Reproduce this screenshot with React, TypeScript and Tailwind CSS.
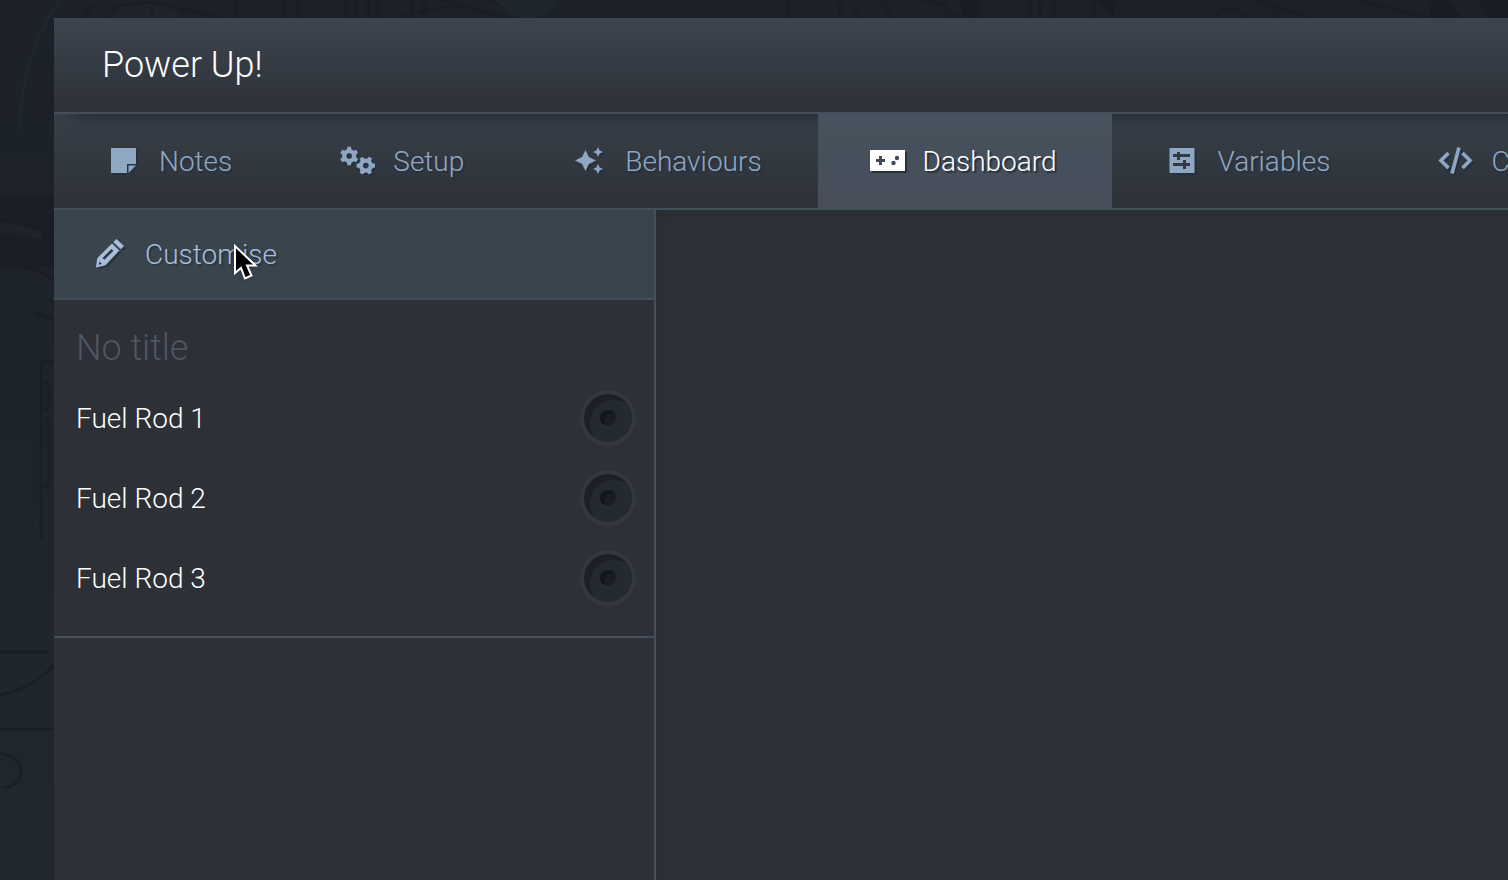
import type { ReactNode } from "react";

type Tab = { label: string; icon: ReactNode; active?: boolean };

function NotesIcon() {
  return (
    <svg viewBox="0 0 36 36" className="h-9 w-9 shrink-0" fill="currentColor" aria-hidden>
      <path d="M5 5h25v16h-9v9H5z" />
      <path d="M22.500 22.500H30L22.500 30z" />
    </svg>
  );
}

function Gear({ cx, cy, turn }: { cx: number; cy: number; turn: number }) {
  return (
    <g transform={`translate(${cx} ${cy}) rotate(${turn})`}>
      <circle r="5" fill="none" stroke="currentColor" strokeWidth="4.200" />
      {[0, 60, 120, 180, 240, 300].map((a) => (
        <path key={a} d="M-2.300 -6h4.600l-.5 -3.200h-3.600z" transform={`rotate(${a})`} />
      ))}
    </g>
  );
}

function SetupIcon() {
  return (
    <svg viewBox="0 0 36 36" className="h-9 w-9 shrink-0" fill="currentColor" aria-hidden>
      <Gear cx={9.2} cy={13} turn={0} />
      <Gear cx={25.8} cy={22.6} turn={30} />
    </svg>
  );
}

function SparkleIcon() {
  return (
    <svg viewBox="0 0 36 36" className="h-9 w-9 shrink-0" fill="currentColor" aria-hidden>
      <path d="M13.500 7l3.400 7.100L24 17.500l-7.100 3.400L13.500 28l-3.400-7.100L3 17.500l7.100-3.400z" />
      <path d="M26 4l1.600 3.400L31 9l-3.400 1.600L26 14l-1.600-3.400L21 9l3.400-1.600z" />
      <path d="M26 21l1.600 3.400L31 26l-3.400 1.600L26 31l-1.600-3.400L21 26l3.400-1.600z" />
    </svg>
  );
}

function DashboardIcon() {
  return (
    <svg viewBox="0 0 36 36" className="h-9 w-9 shrink-0" fill="currentColor" aria-hidden>
      <path d="M0 7h35v21H0z" />
      <g fill="#414b57">
        <path d="M9 13h3v3h3v3h-3v3H9v-3H6v-3h3z" />
        <circle cx="27" cy="15" r="2.200" />
        <circle cx="23.500" cy="20" r="2.200" />
      </g>
    </svg>
  );
}

function VariablesIcon() {
  return (
    <svg viewBox="0 0 36 36" className="h-9 w-9 shrink-0" fill="currentColor" aria-hidden>
      <path d="M5.500 5h25v25h-25z" />
      <g fill="#323943">
        <path d="M9 11h4V9h3v2h10v3H16v3h-3v-3H9z" />
        <path d="M9 20h10v-3h3v3h4v3h-4v3h-3v-3H9z" />
      </g>
    </svg>
  );
}

function CodeIcon() {
  return (
    <svg
      viewBox="0 0 36 36"
      className="h-9 w-9 shrink-0"
      fill="none"
      stroke="currentColor"
      strokeWidth="3.600"
      aria-hidden
    >
      <path d="M10.500 10L3 17.500l7.500 7.500M24.500 10l7.500 7.500-7.500 7.500M21 4.500l-7 26" />
    </svg>
  );
}

function PencilIcon() {
  return (
    <svg viewBox="0 0 36 36" className="h-9 w-9 shrink-0" fill="currentColor" aria-hidden>
      <path d="M24.500 3l7.500 7-3.200 3.200-7.500-7.200z" />
      <path
        fillRule="evenodd"
        d="M20 7.500l7.300 7L13.500 29.300 4 31.500l1.200-9.200zM19.500 13L10.500 22l1.900 1.700 9-9zM7.500 25.500l-.8 3.300 3.300-.8z"
      />
    </svg>
  );
}

const TABS: Tab[] = [
  { label: "Notes", icon: <NotesIcon /> },
  { label: "Setup", icon: <SetupIcon /> },
  { label: "Behaviours", icon: <SparkleIcon /> },
  { label: "Dashboard", icon: <DashboardIcon />, active: true },
  { label: "Variables", icon: <VariablesIcon /> },
  { label: "Code", icon: <CodeIcon /> },
];

const RODS = ["Fuel Rod 1", "Fuel Rod 2", "Fuel Rod 3"];

// Faint line art behind the window
function Backdrop() {
  return (
    <svg
      className="pointer-events-none absolute top-0 left-0 h-[880px] w-[1508px] opacity-70"
      viewBox="0 0 1508 880"
      fill="none"
      stroke="#181d25"
      strokeWidth="3"
      aria-hidden
    >
      <path d="M0 197h54v70H0z" fill="#191e26" stroke="none" />
      <path d="M60 0C30 40 20 90 20 130" stroke="#1e2930" />
      <path d="M0 197h54" />
      <path d="M108 20l8-14 36-4 30 8v10z" fill="#20252d" />
      <path d="M82 18l12-14M152 0v18M182 8l40 10M236 0v18M284 0v18M298 0v18" />
      <path d="M0 220l42 8 10 14M0 238l46 12M0 263q34 2 54 17M34 312l20 8" strokeWidth="4" />
      <path d="M0 222l42 9v8L0 232z" fill="#20252d" stroke="none" />
      <path d="M54 362H41v177M44 382q5 0 5 6v18q0 4-5 4M44 418q5 0 5 6v56q0 7-5 7" />
      <path d="M0 652h48M0 695q32-6 54-30M0 729h54M0 753q24 6 21 21-3 12-19 14" />
      <path d="M346 0v18M356 0v18M368 0v18M378 0v18M412 0v18M424 0v18" strokeWidth="5" />
      <path d="M440 0l70 18M490 0l36 18M400 16l50-10" />
      <path d="M494 0h62q-2 12-22 18h-12q-16-6-28-18z" fill="#20282f" stroke="none" />
      <path d="M690 18l20-18h78v18z" fill="#1b2029" stroke="none" />
      <path d="M788 0v18M840 0v18M854 4l4 14M880 0l12 18" />
      <path d="M920 0l26 5v13h14l-14-10M978 2v16M1030 0v18M1040 0v18M1054 0v18M1094 0v18" />
      <path
        d="M958 0h20v18h-14zM1098 0h20l-6 18zM1432 0h16l14 18h-34zM1478 0h30v18h-20z"
        fill="#171b23"
        stroke="none"
      />
      <path d="M1214 18q14-18 34 0M1256 0l54 18M1360 0l70 18M1268 0l10 18" />
    </svg>
  );
}

function Cursor() {
  return (
    <svg
      viewBox="0 0 28 42"
      className="pointer-events-none absolute top-8 left-[178px] h-[42px] w-7 drop-shadow-sm"
      aria-hidden
    >
      <path
        d="M3 4v27l6-5 4 10.500 6.500-3-4.500-10h8.500z"
        fill="#000"
        stroke="#fff"
        strokeWidth="2"
      />
    </svg>
  );
}

export default function App() {
  return (
    <div className="relative flex min-h-screen flex-col overflow-hidden bg-linear-to-b from-[#1c2128] to-[#21272f] pt-[18px] pl-[54px] font-['Roboto',sans-serif] text-[28px] leading-9 font-light text-white">
      <Backdrop />
      {/* the window runs on past the right edge */}
      <div className="relative -mr-10 flex flex-1 flex-col bg-[#2d3037]">
        <header className="relative z-10 flex h-24 items-center border-b-2 border-[#454f5c] bg-linear-to-b from-[#3c454f] to-[#2d3138] px-12 shadow-[0_20px_20px_-20px_#1d2127]">
          <h1 className="text-4xl leading-10 font-light">Power Up!</h1>
        </header>

        <nav className="flex h-24 overflow-hidden border-b-2 border-[#454f5c] bg-linear-to-b from-[#384049] to-[#2d3138]">
          {TABS.map((tab) => (
            <button
              key={tab.label}
              className={
                tab.active
                  ? "relative z-20 flex shrink-0 items-center gap-[17px] bg-linear-to-b from-[#46525d] to-[#464e5a] pr-14 pl-[52px] text-white"
                  : "flex shrink-0 items-center gap-[17px] pr-14 pl-[52px] text-[#8fa7c2]"
              }
            >
              <span className="drop-shadow-[2px_2px_0_#27313e]">{tab.icon}</span>
              <span className="pt-0.5 [text-shadow:2px_2px_1px_#27313e]">{tab.label}</span>
            </button>
          ))}
        </nav>

        <div className="flex flex-1">
          <aside className="w-[602px] shrink-0 border-r-2 border-[#454f5c]">
            <button className="relative flex h-[90px] w-full items-center gap-[17px] border-b-2 border-[#454f5c] bg-[#3a444d] px-[38px] text-[#a6bddb]">
              <span className="drop-shadow-[2px_2px_0_#2b3541]">
                <PencilIcon />
              </span>
              <span className="pt-0.5 [text-shadow:2px_2px_1px_#2b3541]">Customise</span>
              <Cursor />
            </button>

            <section className="border-b-2 border-[#454f5c] pb-[18px]">
              <h2 className="px-[22px] pt-7 pb-2.5 text-4xl leading-10 font-light text-[#4d5664]">
                No title
              </h2>
              <ul>
                {RODS.map((rod) => (
                  <li key={rod} className="flex h-20 items-center justify-between pr-[18px] pl-[22px]">
                    <span className="pt-0.5">{rod}</span>
                    <button
                      aria-label={rod}
                      className="flex size-14 items-center justify-center rounded-full border-4 border-[#333740] bg-[#242a31] shadow-[inset_6px_6px_0_#1d2126]"
                    >
                      <span className="size-4 rounded-full bg-[#1b1f24] shadow-[inset_4px_4px_0_#14171c]" />
                    </button>
                  </li>
                ))}
              </ul>
            </section>
          </aside>
          <main className="flex-1 shadow-[inset_4px_4px_6px_#292d34]" />
        </div>
      </div>
    </div>
  );
}
